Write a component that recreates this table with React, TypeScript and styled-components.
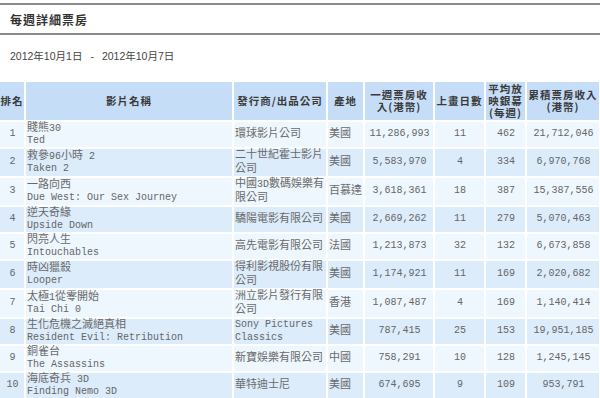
import React from 'react'
import styled, { createGlobalStyle } from 'styled-components'

const GlobalStyle = createGlobalStyle`
  body {
    margin: 0;
    background: #fff;
    font-family: 'Liberation Sans', 'Noto Sans CJK TC', sans-serif;
  }
`

const Page = styled.div`
  width: 600px;
  overflow: hidden;
  padding-top: 3px;
`

const TitleBar = styled.div`
  height: 28px;
  display: flex;
  align-items: center;
  padding-left: 10px;
  border-top: 2px solid #8c8c8c;
  border-bottom: 2px solid #8c8c8c;
`

const Title = styled.h1`
  margin: 0;
  font-family: 'Noto Sans CJK TC', sans-serif;
  font-size: 12px;
  font-weight: 700;
  letter-spacing: 1px;
  color: #333;
`

const DateLine = styled.div`
  margin: 14px 0 17px;
  padding-left: 10px;
  font-size: 10.5px;
  line-height: 14px;
  color: #444;
`

const Dash = styled.span`
  margin: 0 8px;
`

const Table = styled.table`
  margin-left: -2px;
  width: 603px;
  table-layout: fixed;
  border-collapse: separate;
  border-spacing: 2px;
`

const Col = styled.col<{ $w: number }>`
  width: ${(p) => p.$w}px;
`

const HeadRow = styled.tr`
  height: 38px;
  background: #c6ddf7;
`

const Th = styled.th`
  padding: 0;
  font-family: 'Noto Sans CJK TC', sans-serif;
  font-size: 10.5px;
  font-weight: 700;
  letter-spacing: 1px;
  line-height: 12px;
  color: #3a3a3a;
  text-align: center;
  vertical-align: middle;
`

const BodyRow = styled.tr<{ $alt: boolean }>`
  height: 25px;
  background: ${(p) => (p.$alt ? '#dcecfb' : '#eef7fe')};
`

const Td = styled.td<{ $align: 'left' | 'center' }>`
  padding: 0 0 0 1px;
  font-family: 'Liberation Mono', 'Noto Sans CJK TC', monospace;
  font-size: 10px;
  line-height: 12.5px;
  color: #666;
  text-align: ${(p) => p.$align};
  vertical-align: middle;
`

/* small line-height keeps the CJK run inside the mono line box */
const Han = styled.span`
  font-family: 'Noto Sans CJK TC', sans-serif;
  font-size: 11px;
  line-height: 8px;
  color: #6a6a6a;
`

const Line = styled.div`
  height: 12.5px;
  white-space: nowrap;
`

const isHan = /[\u3000-\u9fff\uff00-\uffef]/

const Mixed: React.FC<{ text: string }> = ({ text }) => {
  const parts = text.split(/([\u3000-\u9fff\uff00-\uffef]+)/).filter(Boolean)
  return (
    <>
      {parts.map((p, i) => (isHan.test(p) ? <Han key={i}>{p}</Han> : <span key={i}>{p}</span>))}
    </>
  )
}

const columns = [
  { w: 24, label: '排名' },
  { w: 206, label: '影片名稱' },
  { w: 92, label: '發行商/出品公司' },
  { w: 35, label: '產地' },
  { w: 68, label: '一週票房收入(港幣)' },
  { w: 49, label: '上畫日數' },
  { w: 39, label: '平均放映銀幕(每週)' },
  { w: 72, label: '累積票房收入(港幣)' },
]

const films = [
  ['1', '賤熊30', 'Ted', '環球影片公司', '美國', '11,286,993', '11', '462', '21,712,046'],
  ['2', '救參96小時 2', 'Taken 2', '二十世紀霍士影片公司', '美國', '5,583,970', '4', '334', '6,970,768'],
  ['3', '一路向西', 'Due West: Our Sex Journey', '中國3D數碼娛樂有限公司', '百慕達', '3,618,361', '18', '387', '15,387,556'],
  ['4', '逆天奇緣', 'Upside Down', '驕陽電影有限公司', '美國', '2,669,262', '11', '279', '5,070,463'],
  ['5', '閃亮人生', 'Intouchables', '高先電影有限公司', '法國', '1,213,873', '32', '132', '6,673,858'],
  ['6', '時凶獵殺', 'Looper', '得利影視股份有限公司', '美國', '1,174,921', '11', '169', '2,020,682'],
  ['7', '太極1從零開始', 'Tai Chi 0', '洲立影片發行有限公司', '香港', '1,087,487', '4', '169', '1,140,414'],
  ['8', '生化危機之滅絕真相', 'Resident Evil: Retribution', 'Sony Pictures Classics', '美國', '787,415', '25', '153', '19,951,185'],
  ['9', '銅雀台', 'The Assassins', '新寶娛樂有限公司', '中國', '758,291', '10', '128', '1,245,145'],
  ['10', '海底奇兵 3D', 'Finding Nemo 3D', '華特迪士尼', '美國', '674,695', '9', '109', '953,791'],
]

export default function App() {
  return (
    <Page>
      <GlobalStyle />
      <TitleBar>
        <Title>每週詳細票房</Title>
      </TitleBar>
      <DateLine>
        2012年10月1日<Dash>-</Dash>2012年10月7日
      </DateLine>
      <Table>
        <colgroup>
          {columns.map((c) => (
            <Col key={c.label} $w={c.w} />
          ))}
        </colgroup>
        <thead>
          <HeadRow>
            {columns.map((c) => (
              <Th key={c.label}>{c.label}</Th>
            ))}
          </HeadRow>
        </thead>
        <tbody>
          {films.map((f, i) => (
            <BodyRow key={f[0]} $alt={i % 2 === 1}>
              <Td $align="center">{f[0]}</Td>
              <Td $align="left">
                <Line>
                  <Mixed text={f[1]} />
                </Line>
                <Line>{f[2]}</Line>
              </Td>
              <Td $align="left">
                <Mixed text={f[3]} />
              </Td>
              <Td $align="left">
                <Mixed text={f[4]} />
              </Td>
              <Td $align="center">{f[5]}</Td>
              <Td $align="center">{f[6]}</Td>
              <Td $align="center">{f[7]}</Td>
              <Td $align="center">{f[8]}</Td>
            </BodyRow>
          ))}
        </tbody>
      </Table>
    </Page>
  )
}
